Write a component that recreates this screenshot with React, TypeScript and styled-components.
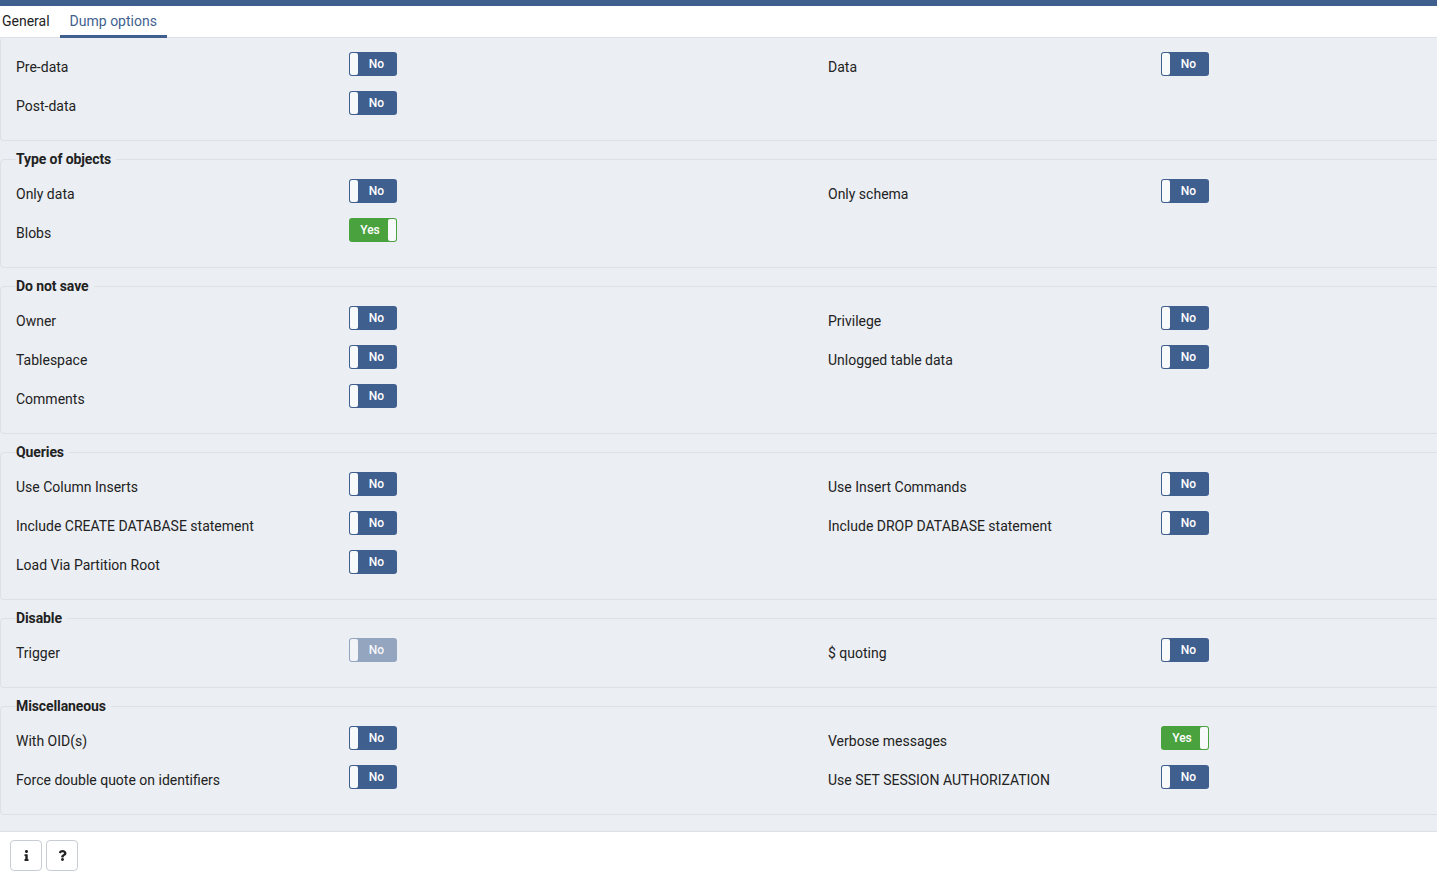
import React from 'react';
import styled, { createGlobalStyle } from 'styled-components';
import { FaInfo, FaQuestion } from 'react-icons/fa';

const GlobalStyle = createGlobalStyle`
    html, body {
        margin: 0;
        padding: 0;
        background: #ffffff;
        font-family: Roboto, 'Liberation Sans', sans-serif;
        color: #222222;
        overflow: hidden;
    }
    * {
        box-sizing: border-box;
    }
`;

const BLUE = '#3f5f8f';
const GREEN = '#4aa23f';
const BORDER = '#dde0e6';
const BG = '#ebeef3';

const Page = styled.div`
    display: flex;
    flex-direction: column;
    width: 100%;
    height: 871px;
`;

const TopBar = styled.div`
    height: 6px;
    background: ${BLUE};
    flex-shrink: 0;
`;

const TabBar = styled.div`
    display: flex;
    height: 32px;
    border-bottom: 1px solid ${BORDER};
    margin-left: -8px;
    flex-shrink: 0;
`;

const Tab = styled.div<{ $active?: boolean }>`
    display: flex;
    align-items: center;
    padding: 0 10px;
    font-size: 14px;
    color: ${(p) => (p.$active ? BLUE : '#222222')};
    border-bottom: 3px solid ${(p) => (p.$active ? BLUE : 'transparent')};
    margin-bottom: -1px;
`;

const Content = styled.div`
    background: ${BG};
    display: flex;
    flex-direction: column;
    gap: 8px;
    padding-bottom: 16px;
    border-bottom: 1px solid ${BORDER};
    overflow: hidden;
    flex-shrink: 0;
`;

const FieldSet = styled.fieldset<{ $plain?: boolean }>`
    margin: 0 -4px 0 0;
    border: 1px solid ${BORDER};
    border-top-color: ${(p) => (p.$plain ? 'transparent' : BORDER)};
    border-radius: 4px;
    padding: ${(p) => (p.$plain ? '13px' : '10px')} 15px 25px;
    display: flex;
    flex-direction: column;
    gap: 15px;
    min-width: 0;
`;

const Legend = styled.legend`
    font-size: 14px;
    font-weight: 700;
    line-height: 20px;
    padding: 0 5px 0 0;
    margin-left: 0;
    color: #222222;
    letter-spacing: -0.1px;
`;

const Row = styled.div`
    display: grid;
    grid-template-columns: 812px 1fr;
    height: 24px;
`;

const Field = styled.div`
    display: grid;
    grid-template-columns: 333px auto;
    align-items: start;
    height: 24px;
`;

const Label = styled.label`
    font-size: 14px;
    line-height: 17px;
    padding-top: 7px;
    color: #222222;
`;

const ToggleBox = styled.div<{ $on?: boolean; $disabled?: boolean }>`
    position: relative;
    width: 48px;
    height: 24px;
    border-radius: 3px;
    background: ${(p) => (p.$on ? GREEN : BLUE)};
    opacity: ${(p) => (p.$disabled ? 0.5 : 1)};
    display: flex;
    align-items: center;
    justify-content: center;
    padding: ${(p) => (p.$on ? '0 6px 0 0' : '0 0 0 7px')};
    color: #ffffff;
    font-size: 12px;
    font-weight: 500;
`;

const Handle = styled.span<{ $on?: boolean }>`
    position: absolute;
    top: 1px;
    bottom: 1px;
    ${(p) => (p.$on ? 'right: 1px;' : 'left: 1px;')}
    width: 8px;
    border-radius: 2px;
    background: #f8f9fb;
`;

const Footer = styled.div`
    display: flex;
    gap: 4px;
    padding: 8px 10px;
    background: #ffffff;
`;

const IconButton = styled.button`
    width: 32px;
    height: 31px;
    border: 1px solid #c8ccd4;
    border-radius: 4px;
    background: #ffffff;
    display: flex;
    align-items: center;
    justify-content: center;
    color: #222222;
    padding: 0;
    font-size: 11px;
`;

type Opt = { label: string; on?: boolean; disabled?: boolean };
type Group = { legend?: string; rows: [Opt, Opt?][] };

const groups: Group[] = [
    {
        rows: [
            [{ label: 'Pre-data' }, { label: 'Data' }],
            [{ label: 'Post-data' }],
        ],
    },
    {
        legend: 'Type of objects',
        rows: [
            [{ label: 'Only data' }, { label: 'Only schema' }],
            [{ label: 'Blobs', on: true }],
        ],
    },
    {
        legend: 'Do not save',
        rows: [
            [{ label: 'Owner' }, { label: 'Privilege' }],
            [{ label: 'Tablespace' }, { label: 'Unlogged table data' }],
            [{ label: 'Comments' }],
        ],
    },
    {
        legend: 'Queries',
        rows: [
            [{ label: 'Use Column Inserts' }, { label: 'Use Insert Commands' }],
            [{ label: 'Include CREATE DATABASE statement' }, { label: 'Include DROP DATABASE statement' }],
            [{ label: 'Load Via Partition Root' }],
        ],
    },
    {
        legend: 'Disable',
        rows: [[{ label: 'Trigger', disabled: true }, { label: '$ quoting' }]],
    },
    {
        legend: 'Miscellaneous',
        rows: [
            [{ label: 'With OID(s)' }, { label: 'Verbose messages', on: true }],
            [{ label: 'Force double quote on identifiers' }, { label: 'Use SET SESSION AUTHORIZATION' }],
        ],
    },
];

const Toggle: React.FC<{ on?: boolean; disabled?: boolean }> = ({ on, disabled }) => (
    <ToggleBox $on={on} $disabled={disabled}>
        <Handle $on={on} />
        {on ? 'Yes' : 'No'}
    </ToggleBox>
);

const OptField: React.FC<{ opt?: Opt }> = ({ opt }) => {
    if (!opt) return <div />;
    return (
        <Field>
            <Label>{opt.label}</Label>
            <Toggle on={opt.on} disabled={opt.disabled} />
        </Field>
    );
};

export default function App() {
    return (
        <Page>
            <GlobalStyle />
            <TopBar />
            <TabBar>
                <Tab>General</Tab>
                <Tab $active>Dump options</Tab>
            </TabBar>
            <Content>
                {groups.map((g, i) => (
                    <FieldSet key={i} $plain={!g.legend}>
                        {g.legend && <Legend>{g.legend}</Legend>}
                        {g.rows.map((r, j) => (
                            <Row key={j}>
                                <OptField opt={r[0]} />
                                <OptField opt={r[1]} />
                            </Row>
                        ))}
                    </FieldSet>
                ))}
            </Content>
            <Footer>
                <IconButton>
                    <FaInfo />
                </IconButton>
                <IconButton>
                    <FaQuestion />
                </IconButton>
            </Footer>
        </Page>
    );
}
